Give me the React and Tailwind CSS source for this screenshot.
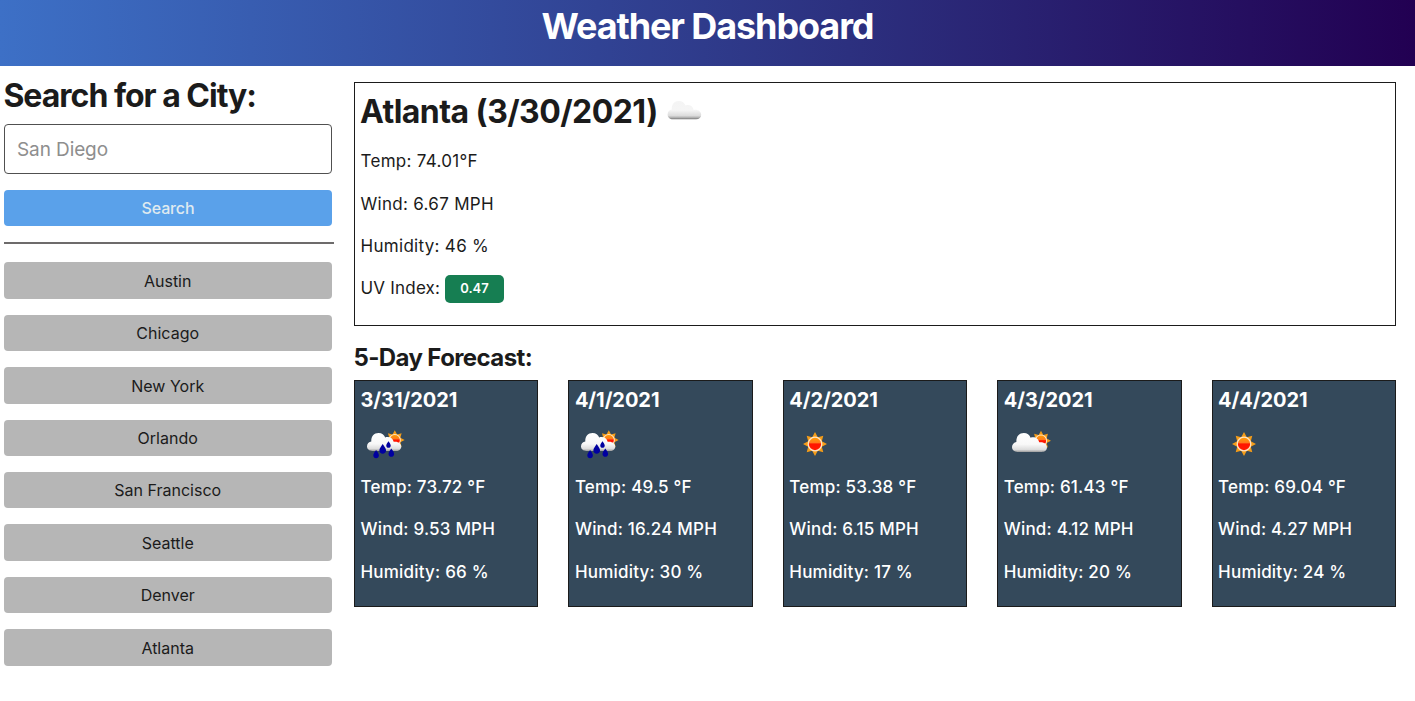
const CITIES = ['Austin', 'Chicago', 'New York', 'Orlando', 'San Francisco', 'Seattle', 'Denver', 'Atlanta'];

const DAYS = [
  { date: '3/31/2021', icon: 'rain', temp: '73.72', wind: '9.53', humidity: 66 },
  { date: '4/1/2021', icon: 'rain', temp: '49.5', wind: '16.24', humidity: 30 },
  { date: '4/2/2021', icon: 'sun', temp: '53.38', wind: '6.15', humidity: 17 },
  { date: '4/3/2021', icon: 'partly', temp: '61.43', wind: '4.12', humidity: 20 },
  { date: '4/4/2021', icon: 'sun', temp: '69.04', wind: '4.27', humidity: 24 },
];

// Shared gradients for all weather icons
function Defs() {
  return (
    <svg width="0" height="0" className="absolute" aria-hidden="true">
      <defs>
        <linearGradient id="cloud" x1="0" y1="0" x2="0" y2="1">
          <stop offset="0" stopColor="#ffffff" />
          <stop offset="0.6" stopColor="#f8f8f8" />
          <stop offset="0.87" stopColor="#dddddd" />
          <stop offset="1" stopColor="#9c9c9c" />
        </linearGradient>
        <linearGradient id="cloudLight" x1="0" y1="0" x2="0" y2="1">
          <stop offset="0" stopColor="#f4f4f4" />
          <stop offset="0.5" stopColor="#f5f5f5" />
          <stop offset="0.8" stopColor="#dcdcdc" />
          <stop offset="0.9" stopColor="#b4b4b4" />
          <stop offset="1" stopColor="#757575" />
        </linearGradient>
        <linearGradient id="disc" x1="0" y1="0" x2="0" y2="1">
          <stop offset="0" stopColor="#ffa200" />
          <stop offset="0.4" stopColor="#ff7a1c" />
          <stop offset="0.5" stopColor="#ff1500" />
          <stop offset="1" stopColor="#ff1a00" />
        </linearGradient>
      </defs>
    </svg>
  );
}

function Sun({ x, y, scale = 1 }) {
  return (
    <g transform={`translate(${x} ${y}) scale(${scale})`}>
      <path
        fill="#f59d18"
        d="M0 -12 L2.8 -6.8 L8.3 -8.3 L6.8 -2.8 L12 0 L6.8 2.8 L8.3 8.3 L2.8 6.8 L0 12 L-2.8 6.8 L-8.3 8.3 L-6.8 2.8 L-12 0 L-6.8 -2.8 L-8.3 -8.3 L-2.8 -6.8Z"
      />
      <circle r="6.8" fill="url(#disc)" stroke="#ffe3c4" strokeWidth="1.3" />
    </g>
  );
}

const CLOUD = 'M5.5 19.5C2.2 19.5 0 17.5 0 14.6C0 11.8 2 9.9 4.4 9.5C4 4 7.2 0.5 11.8 0.5C15.2 0.5 17.6 2.5 18.6 5.2C22.6 3.8 26.5 6 27.2 9.8C31.5 9 35 11.5 35 14.8C35 17.7 32.8 19.5 29.8 19.5Z';
const DROP = 'M0 -4.2C1 -2.4 2.8 -0.8 2.8 1.1C2.8 2.9 1.6 4 0 4C-1.6 4 -2.8 2.9 -2.8 1.1C-2.8 -0.8 -1 -2.4 0 -4.2Z';

function WeatherIcon({ kind }) {
  return (
    <svg width="50" height="50" viewBox="0 0 50 50" className="block">
      {kind === 'sun' && <Sun x={25} y={25} />}
      {kind === 'partly' && (
        <>
          <Sun x={37} y={21.7} scale={0.83} />
          <path d={CLOUD} fill="url(#cloud)" transform="translate(8 13.5)" />
        </>
      )}
      {kind === 'rain' && (
        <>
          <Sun x={33.8} y={21} scale={0.82} />
          <path d={CLOUD} fill="url(#cloud)" transform="translate(6 13.5) scale(.98 .95)" />
          <g fill="#0000a0">
            <path d={DROP} transform="translate(15.1 35.2)" />
            <path d={DROP} transform="translate(21.7 30) scale(1.2)" />
            <path d={DROP} transform="translate(27.5 25.6) scale(.8)" />
            <path d={DROP} transform="translate(30.3 33.8)" />
          </g>
        </>
      )}
    </svg>
  );
}

function CurrentIcon() {
  return (
    <svg width="50" height="40" viewBox="0 0 50 40" className="block">
      <path d={CLOUD} fill="url(#cloudLight)" transform="translate(7.6 9.4) scale(.96 .97)" />
    </svg>
  );
}

export default function App() {
  return (
    <div className="h-[701px] w-[1415px] overflow-hidden bg-white font-['Inter',sans-serif] text-[#1b1b1b]">
      <Defs />
      <header className="flex h-[66px] justify-center bg-[linear-gradient(90deg,#3d70c6_0%,#2c307f_60%,#220052_100%)] pt-[2px]">
        <h1 className="text-[36px] leading-[48px] font-bold tracking-[-1.1px] text-white">Weather Dashboard</h1>
      </header>

      <div className="flex">
        <aside className="w-[354px] pt-[9px] pl-1">
          <h2 className="-ml-[0.6px] h-[49px] text-[32px] leading-[41px] font-bold tracking-[-1px]">Search for a City:</h2>
          <input
            className="block h-[50px] w-[328px] rounded-[4px] border border-[#505050] px-3 text-[19px] tracking-[-0.1px] placeholder:text-[#8e8e8e]"
            placeholder="San Diego"
          />
          <button className="mt-4 block h-9 w-[328px] rounded-[4px] bg-[#5aa1ea] text-[16px] font-medium tracking-[-0.15px] text-[#dfeaf0]">Search</button>
          <div className="mt-4 mb-[18.4px] h-[2px] w-[330px] bg-[#6d6b6b]" />
          <div className="flex flex-col gap-[15.9px]">
            {CITIES.map((city) => (
              <button key={city} className="h-[36.5px] w-[328px] shrink-0 rounded-[4px] bg-[#b6b6b6] pt-[0.3px] pr-[0.6px] text-[16px]">
                {city}
              </button>
            ))}
          </div>
        </aside>

        <main className="w-[1042px] pt-4">
          <section className="h-[244px] border border-[#1b1b1b] pl-[5.5px] text-[17px] tracking-[0.3px]">
            <div className="flex h-[57.3px] items-start">
              <h2 className="-ml-[0.5px] pt-[8px] text-[32px] leading-[41px] font-bold tracking-[-0.55px]">Atlanta (3/30/2021)</h2>
              <div className="pt-[8px] pl-[2px]">
                <CurrentIcon />
              </div>
            </div>
            <p className="h-[42.4px] leading-[42.4px]">Temp: 74.01°F</p>
            <p className="h-[42.4px] leading-[42.4px]">Wind: 6.67 MPH</p>
            <p className="h-[42.4px] leading-[42.4px]">Humidity: 46 %</p>
            <div className="flex h-[42.4px] items-center">
              <span className="w-[84.5px] tracking-[0.2px]">UV Index:</span>
              <span className="mt-[1px] flex h-7 w-[59px] items-center justify-center rounded-[5px] bg-[#167e52] text-[13px] font-semibold tracking-normal text-white">
                0.47
              </span>
            </div>
          </section>

          <h3 className="-ml-[0.6px] mt-4 h-[38px] text-[24px] leading-8 font-bold tracking-[-0.6px]">5-Day Forecast:</h3>
          <div className="grid grid-cols-5 gap-[30px]">
            {DAYS.map((day) => (
              <article key={day.date} className="h-[227px] border border-[#1b1b1b] bg-[#34495b] pl-[5.5px] text-[17px] font-medium tracking-[0.2px] text-white">
                <h4 className="h-[38px] pt-[4px] text-[20px] leading-[30px] font-bold tracking-[-0.05px]">{day.date}</h4>
                <div className="pl-[0.5px]">
                  <WeatherIcon kind={day.icon} />
                </div>
                <div className="-mt-[3px]">
                  <p className="h-[42.4px] leading-[42.4px]">Temp: {day.temp} °F</p>
                  <p className="h-[42.4px] leading-[42.4px]">Wind: {day.wind} MPH</p>
                  <p className="h-[42.4px] leading-[42.4px]">Humidity: {day.humidity} %</p>
                </div>
              </article>
            ))}
          </div>
        </main>
      </div>
    </div>
  );
}
